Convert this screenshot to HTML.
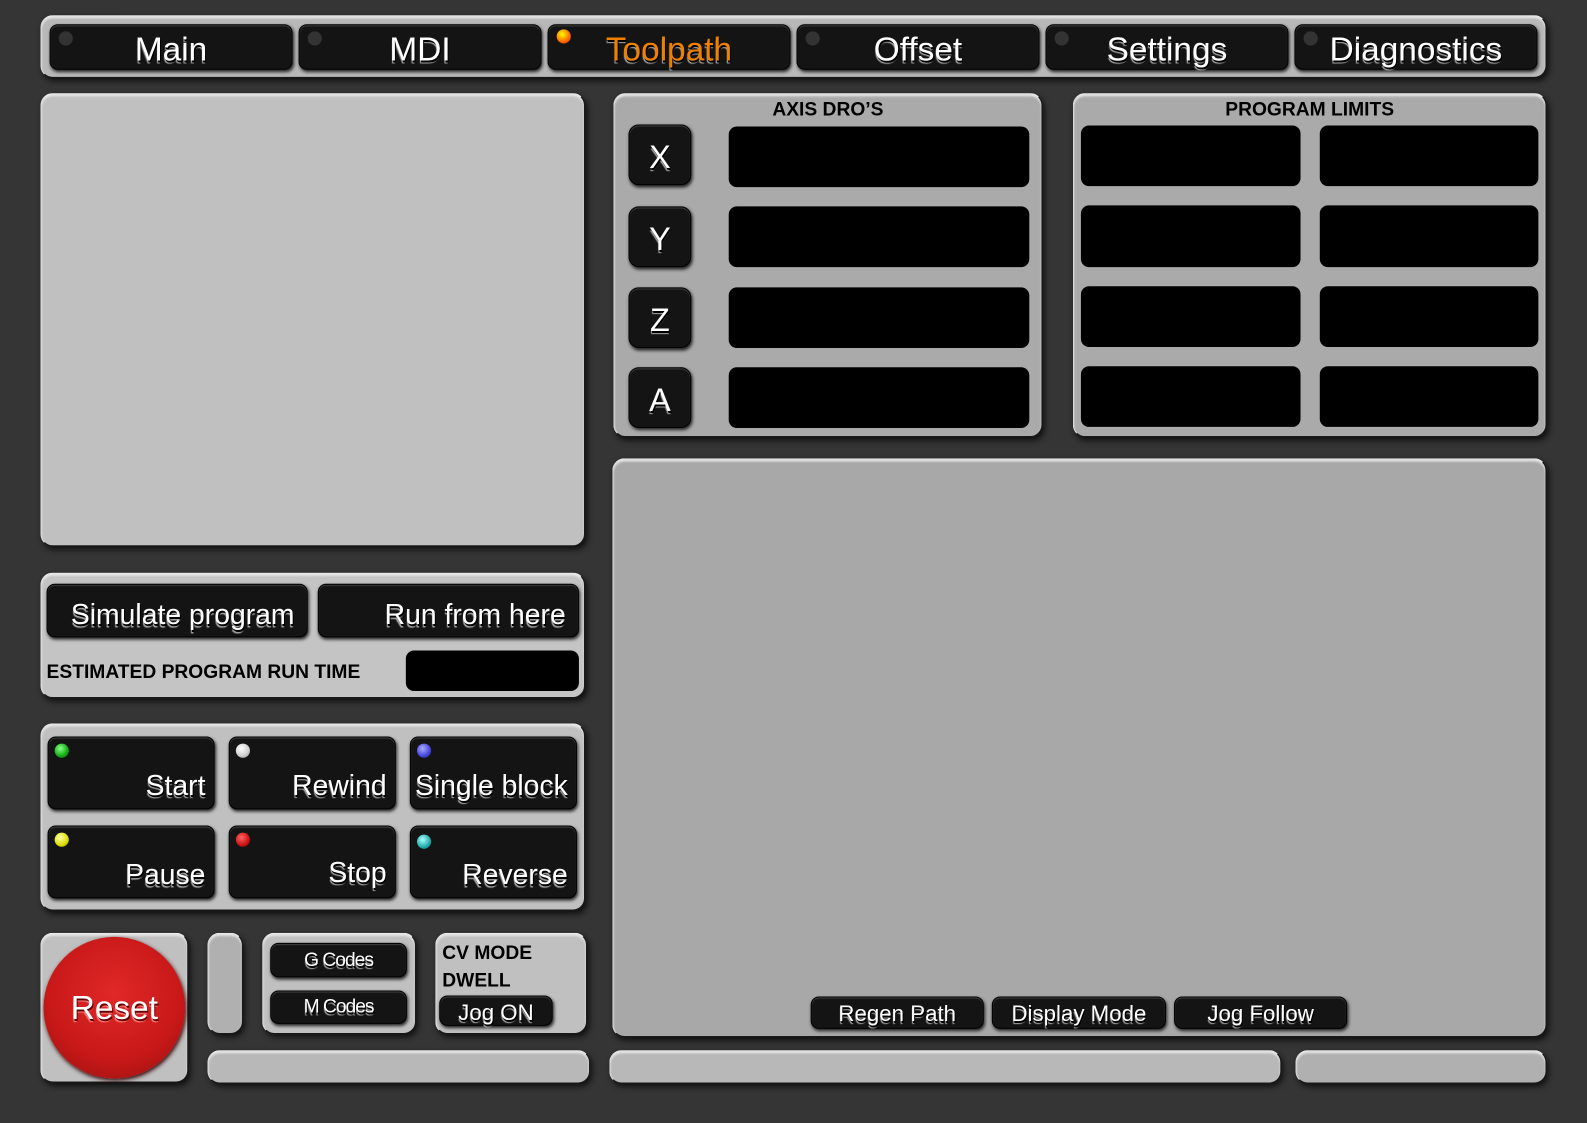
<!DOCTYPE html>
<html><head><meta charset="utf-8"><style>
html,body{margin:0;padding:0;background:#353535;overflow:hidden;width:1587px;height:1123px}
#w{position:absolute;left:0;top:0;width:1568px;height:1110px;transform:scale(1.0121,1.0117);transform-origin:0 0;font-family:"Liberation Sans",sans-serif}
.a{position:absolute;box-sizing:border-box}
.p{background:#c0c0c0;border-radius:12px;border:1px solid #1a1a1a;border-top-color:#eee;border-left-color:#ddd;box-shadow:2px 3px 6px #111, inset 0 2px 2px #e8e8e8}
.d{background:#aaa}
.b{background:#141414;border-radius:8px;border:1px solid #000;box-shadow:1px 2px 3px #222, inset 0 1px 1px #444;color:#fff;text-shadow:1px 2px 0 #000,0 3px 1px #aaa}
.k{background:#000;border-radius:8px}
.t{position:absolute;white-space:nowrap}
.led{position:absolute;width:14px;height:14px;border-radius:50%;left:8px;top:8px}
.lbl{color:#000;font-size:19px;font-weight:bold;position:absolute;white-space:nowrap}
</style></head><body><div id="w">
<div class="a p" style="left:40px;top:15px;width:1488px;height:62px;background:#b8b8b8"></div>
<div class="a b" style="left:49px;top:24px;width:240px;height:45px"><div class="led" style="background:#333;top:6px"></div><div class="t" style="width:100%;text-align:center;font-size:33px;top:5px">Main</div></div>
<div class="a b" style="left:295px;top:24px;width:240px;height:45px"><div class="led" style="background:#333;top:6px"></div><div class="t" style="width:100%;text-align:center;font-size:33px;top:5px">MDI</div></div>
<div class="a b" style="left:541px;top:24px;width:240px;height:45px"><div class="led" style="background:radial-gradient(circle at 40% 35%,#ff0,#f60 60%,#c30);top:4px"></div><div class="t" style="width:100%;text-align:center;font-size:33px;top:5px;color:#f08000">Toolpath</div></div>
<div class="a b" style="left:787px;top:24px;width:240px;height:45px"><div class="led" style="background:#333;top:6px"></div><div class="t" style="width:100%;text-align:center;font-size:33px;top:5px">Offset</div></div>
<div class="a b" style="left:1033px;top:24px;width:240px;height:45px"><div class="led" style="background:#333;top:6px"></div><div class="t" style="width:100%;text-align:center;font-size:33px;top:5px">Settings</div></div>
<div class="a b" style="left:1279px;top:24px;width:240px;height:45px"><div class="led" style="background:#333;top:6px"></div><div class="t" style="width:100%;text-align:center;font-size:33px;top:5px">Diagnostics</div></div>

<div class="a p" style="left:40px;top:92px;width:538px;height:448px"></div>

<div class="a p" style="left:40px;top:566px;width:538px;height:124px;background:#c4c4c4"></div>
<div class="a b" style="left:46px;top:577px;width:258px;height:53px"><div class="t" style="right:12px;top:14px;font-size:28px">Simulate program</div></div>
<div class="a b" style="left:314px;top:577px;width:258px;height:53px"><div class="t" style="right:12px;top:14px;font-size:28px">Run from here</div></div>
<div class="lbl" style="left:46px;top:654px">ESTIMATED PROGRAM RUN TIME</div>
<div class="a k" style="left:401px;top:643px;width:171px;height:40px"></div>

<div class="a p" style="left:40px;top:715px;width:538px;height:185px"></div>
<div class="a b" style="left:47px;top:728px;width:165px;height:72px"><div class="led" style="background:radial-gradient(circle at 40% 35%,#8f8,#1a1 60%,#060);left:6px;top:6px"></div><div class="t" style="right:8px;top:32px;font-size:28px">Start</div></div>
<div class="a b" style="left:226px;top:728px;width:165px;height:72px"><div class="led" style="background:radial-gradient(circle at 40% 35%,#fff,#ccc 60%,#888);left:6px;top:6px"></div><div class="t" style="right:8px;top:32px;font-size:28px">Rewind</div></div>
<div class="a b" style="left:405px;top:728px;width:165px;height:72px"><div class="led" style="background:radial-gradient(circle at 40% 35%,#aaf,#44d 60%,#225);left:6px;top:6px"></div><div class="t" style="right:8px;top:32px;font-size:28px">Single block</div></div>
<div class="a b" style="left:47px;top:816px;width:165px;height:72px"><div class="led" style="background:radial-gradient(circle at 40% 35%,#ffa,#dd0 60%,#770);left:6px;top:6px"></div><div class="t" style="right:8px;top:32px;font-size:28px">Pause</div></div>
<div class="a b" style="left:226px;top:816px;width:165px;height:72px"><div class="led" style="background:radial-gradient(circle at 40% 35%,#f66,#c11 60%,#600);left:6px;top:6px"></div><div class="t" style="right:8px;top:30px;font-size:28px">Stop</div></div>
<div class="a b" style="left:405px;top:816px;width:165px;height:72px"><div class="led" style="background:radial-gradient(circle at 40% 35%,#aff,#2aa 60%,#055);left:6px;top:8px"></div><div class="t" style="right:8px;top:32px;font-size:28px">Reverse</div></div>

<div class="a p" style="left:40px;top:922px;width:146px;height:148px"></div>
<div class="a" style="left:43px;top:926px;width:140px;height:140px;border-radius:50%;background:radial-gradient(circle at 50% 40%,#e02828,#c81818 60%,#901010);box-shadow:1px 2px 4px #300"></div>
<div class="t" style="left:43px;top:977px;width:140px;text-align:center;font-size:33px;color:#fff;text-shadow:1px 2px 0 #600,0 3px 1px #f88">Reset</div>
<div class="a p" style="left:205px;top:922px;width:35px;height:100px;background:#b0b0b0"></div>
<div class="a p" style="left:259px;top:922px;width:152px;height:100px"></div>
<div class="a b" style="left:267px;top:932px;width:135px;height:34px"><div class="t" style="width:100%;text-align:center;top:6px;font-size:19px;letter-spacing:-1px">G Codes</div></div>
<div class="a b" style="left:267px;top:979px;width:135px;height:33px"><div class="t" style="width:100%;text-align:center;top:5px;font-size:19px;letter-spacing:-1px">M Codes</div></div>
<div class="a p" style="left:430px;top:922px;width:150px;height:100px"></div>
<div class="lbl" style="left:437px;top:932px">CV MODE</div>
<div class="lbl" style="left:437px;top:959px">DWELL</div>
<div class="a b" style="left:434px;top:984px;width:112px;height:30px"><div class="t" style="width:100%;text-align:center;top:3px;font-size:22px">Jog ON</div></div>

<div class="a p" style="left:205px;top:1038px;width:378px;height:33px;background:#b8b8b8"></div>
<div class="a p" style="left:602px;top:1038px;width:664px;height:33px;background:#b8b8b8"></div>
<div class="a p" style="left:1280px;top:1038px;width:248px;height:33px;background:#b0b0b0"></div>

<div class="a p d" style="left:606px;top:92px;width:424px;height:340px"></div>
<div class="lbl" style="left:606px;top:98px;width:424px;text-align:center">AXIS DRO’S</div>
<div class="a b" style="left:621px;top:123px;width:62px;height:60px;border-radius:10px"><div class="t" style="width:100%;text-align:center;top:13px;font-size:32px">X</div></div>
<div class="a b" style="left:621px;top:204px;width:62px;height:60px;border-radius:10px"><div class="t" style="width:100%;text-align:center;top:13px;font-size:32px">Y</div></div>
<div class="a b" style="left:621px;top:284px;width:62px;height:60px;border-radius:10px"><div class="t" style="width:100%;text-align:center;top:13px;font-size:32px">Z</div></div>
<div class="a b" style="left:621px;top:363px;width:62px;height:60px;border-radius:10px"><div class="t" style="width:100%;text-align:center;top:13px;font-size:32px">A</div></div>
<div class="a k" style="left:720px;top:125px;width:297px;height:60px"></div>
<div class="a k" style="left:720px;top:204px;width:297px;height:60px"></div>
<div class="a k" style="left:720px;top:284px;width:297px;height:60px"></div>
<div class="a k" style="left:720px;top:363px;width:297px;height:60px"></div>

<div class="a p d" style="left:1060px;top:92px;width:468px;height:340px"></div>
<div class="lbl" style="left:1060px;top:98px;width:468px;text-align:center">PROGRAM LIMITS</div>
<div class="a k" style="left:1068px;top:124px;width:217px;height:60px"></div>
<div class="a k" style="left:1304px;top:124px;width:216px;height:60px"></div>
<div class="a k" style="left:1068px;top:203px;width:217px;height:61px"></div>
<div class="a k" style="left:1304px;top:203px;width:216px;height:61px"></div>
<div class="a k" style="left:1068px;top:283px;width:217px;height:60px"></div>
<div class="a k" style="left:1304px;top:283px;width:216px;height:60px"></div>
<div class="a k" style="left:1068px;top:362px;width:217px;height:60px"></div>
<div class="a k" style="left:1304px;top:362px;width:216px;height:60px"></div>

<div class="a p" style="left:605px;top:453px;width:923px;height:572px;background:#a8a8a8"></div>
<div class="a b" style="left:801px;top:985px;width:171px;height:32px"><div class="t" style="width:100%;text-align:center;top:3px;font-size:22px">Regen Path</div></div>
<div class="a b" style="left:980px;top:985px;width:172px;height:32px"><div class="t" style="width:100%;text-align:center;top:3px;font-size:22px">Display Mode</div></div>
<div class="a b" style="left:1160px;top:985px;width:171px;height:32px"><div class="t" style="width:100%;text-align:center;top:3px;font-size:22px">Jog Follow</div></div>
</div></body></html>
